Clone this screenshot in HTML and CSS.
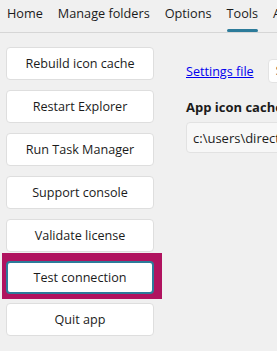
FILE: index.html
```html
<!DOCTYPE html>
<html>
<head>
<meta charset="utf-8">
<link rel="stylesheet" href="styles.css">
</head>
<body>
<nav class="tabs">
  <span class="tab">Home</span>
  <span class="tab">Manage folders</span>
  <span class="tab">Options</span>
  <span class="tab active">Tools</span>
  <span class="tab">About</span>
</nav>
<main class="content">
  <div class="actions">
    <button class="btn">Rebuild icon cache</button>
    <button class="btn">Restart Explorer</button>
    <button class="btn">Run Task Manager</button>
    <button class="btn">Support console</button>
    <button class="btn">Validate license</button>
    <div class="highlight"><button class="btn focused">Test connection</button></div>
    <button class="btn">Quit app</button>
  </div>
  <div class="settings">
    <div class="row">
      <a class="link" href="#">Settings file</a>
      <div class="combo">Select</div>
    </div>
    <div class="label">App icon cache</div>
    <div class="field">c:\users\directory\appdata\local</div>
  </div>
</main>
</body>
</html>
```
FILE: styles.css
```css
html, body {
  margin: 0;
  padding: 0;
}
body {
  background: #f0f0f0;
  color: #1b1b1b;
  font-family: "Open Sans", "Noto Sans", sans-serif;
  font-size: 13px;
  width: 277px;
  height: 351px;
  overflow: hidden;
}
.tabs {
  display: flex;
  gap: 15px;
  padding-left: 7px;
  border-bottom: 1px solid #d6d6d6;
  white-space: nowrap;
  box-sizing: border-box;
  height: 33px;
}
.tab {
  font-size: 12.7px;
  line-height: 26px;
  height: 32px;
  position: relative;
  color: #1b1b1b;
}
.tab.active::after {
  content: "";
  position: absolute;
  left: 0;
  right: 0;
  bottom: 0;
  height: 3px;
  border-radius: 2px;
  background: #2c7b9a;
}
.content {
  display: flex;
  gap: 32px;
  padding-top: 14px;
}
.actions {
  display: flex;
  flex-direction: column;
  gap: 10px;
  padding-left: 6px;
  width: 148px;
  flex: none;
}
.btn {
  display: block;
  width: 148px;
  height: 33px;
  margin: 0;
  background: #ffffff;
  border: 1px solid #dedede;
  border-radius: 4px;
  font-family: inherit;
  font-size: 12.6px;
  color: #1b1b1b;
  padding: 0;
  box-sizing: border-box;
}
.highlight {
  margin: -9px -8px -6px -4px;
  padding: 8px 8px 5px 4px;
  background: #b0135f;
}
.btn.focused {
  border: 2px solid #2c7b9a;
}
.settings {
  padding-top: 12px;
  min-width: 0;
  flex: 1;
  white-space: nowrap;
}
.row {
  display: flex;
  align-items: center;
  gap: 14px;
  height: 24px;
  font-size: 12.6px;
}
.link {
  color: #0000ee;
  text-decoration: underline;
}
.combo {
  background: #fff;
  border: 1px solid #e3e3e3;
  border-radius: 4px;
  height: 24px;
  box-sizing: border-box;
  padding: 2px 7px;
  width: 120px;
}
.label {
  font-weight: bold;
  font-size: 13px;
  margin-top: 15px;
}
.field {
  margin-top: 6px;
  height: 31px;
  box-sizing: border-box;
  background: #f7f7f7;
  border: 1px solid #e2e2e2;
  border-radius: 4px;
  padding: 6px 6px;
  width: 200px;
}
```
